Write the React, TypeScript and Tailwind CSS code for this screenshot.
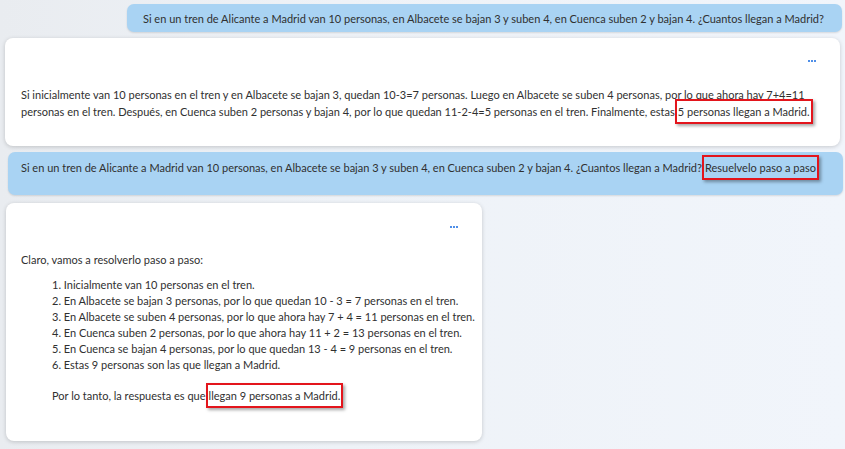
import React from 'react';

const font = { fontFamily: 'Lato, "Liberation Sans", Arial, sans-serif' };

function Mark({ children }: { children: React.ReactNode }) {
  return (
    <span className="whitespace-nowrap border-2 border-[#e3151c] px-[1px] py-[4px] shadow-[2px_2px_3px_rgba(0,0,0,0.35)]">
      {children}
    </span>
  );
}

function Dots() {
  return (
    <div className="flex justify-end gap-[1px] pr-[24px]">
      <span className="h-[2px] w-[2px] bg-[#4f8fe8]" />
      <span className="h-[2px] w-[2px] bg-[#4f8fe8]" />
      <span className="h-[2px] w-[2px] bg-[#4f8fe8]" />
    </div>
  );
}

const question =
  'Si en un tren de Alicante a Madrid van 10 personas, en Albacete se bajan 3 y suben 4, en Cuenca suben 2 y bajan 4. ¿Cuantos llegan a Madrid?';

const steps = [
  'Inicialmente van 10 personas en el tren.',
  'En Albacete se bajan 3 personas, por lo que quedan 10 - 3 = 7 personas en el tren.',
  'En Albacete se suben 4 personas, por lo que ahora hay 7 + 4 = 11 personas en el tren.',
  'En Cuenca suben 2 personas, por lo que ahora hay 11 + 2 = 13 personas en el tren.',
  'En Cuenca se bajan 4 personas, por lo que quedan 13 - 4 = 9 personas en el tren.',
  'Estas 9 personas son las que llegan a Madrid.',
];

export default function App() {
  return (
    <main
      style={font}
      className="h-[449px] w-[845px] overflow-hidden bg-[linear-gradient(90deg,#e9ecf0_0%,#eef2f7_40%,#f1f5fb_100%)] text-[11px] text-[#303030]"
    >
      <div className="pt-[4px]">
        <div className="ml-[127px] w-[715px] whitespace-nowrap rounded-[7px] bg-[#a9d3f3] pl-[16px] pt-[8px] pb-[7px] leading-[13px] shadow-[0_1px_2px_rgba(0,0,0,0.12)]">
          {question}
        </div>

        <div className="ml-[5px] mt-[6px] h-[108px] w-[835px] rounded-[8px] bg-white pt-[22px] pl-[16px] shadow-[0_1px_4px_rgba(0,0,0,0.18)]">
          <Dots />
          <div className="mt-[24px] whitespace-nowrap leading-[17px]">
            Si inicialmente van 10 personas en el tren y en Albacete se bajan 3, quedan 10-3=7 personas. Luego en Albacete se suben 4 personas, por lo que ahora hay 7+4=11
            <br />
            personas en el tren. Después, en Cuenca suben 2 personas y bajan 4, por lo que quedan 11-2-4=5 personas en el tren. Finalmente, estas<Mark>5 personas llegan a Madrid.</Mark>
          </div>
        </div>

        <div className="ml-[8px] mt-[6px] h-[43px] w-[835px] whitespace-nowrap rounded-[7px] bg-[#a9d3f3] pl-[13px] pt-[9px] leading-[13px] shadow-[0_1px_2px_rgba(0,0,0,0.12)]">
          {question}
          <Mark>Resuelvelo paso a paso</Mark>
        </div>

        <div className="ml-[6px] mt-[8px] h-[238px] w-[476px] rounded-[8px] bg-white pt-[23px] pl-[15px] shadow-[0_1px_4px_rgba(0,0,0,0.18)]">
          <Dots />
          <div className="mt-[24px] leading-[16px]">Claro, vamos a resolverlo paso a paso:</div>
          <ol className="mt-[9px] whitespace-nowrap pl-[31px]">
            {steps.map((s, i) => (
              <li key={i} className="h-[16px] leading-[16px]">
                {i + 1}. {s}
              </li>
            ))}
          </ol>
          <div className="mt-[15px] pl-[31px] leading-[16px]">
            Por lo tanto, la respuesta es que<Mark>llegan 9 personas a Madrid.</Mark>
          </div>
        </div>
      </div>
    </main>
  );
}
